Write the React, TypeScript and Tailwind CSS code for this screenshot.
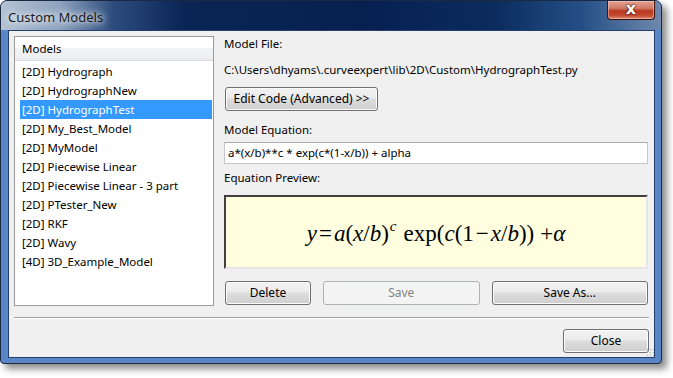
import React from "react";

const models = [
  "[2D] Hydrograph",
  "[2D] HydrographNew",
  "[2D] HydrographTest",
  "[2D] My_Best_Model",
  "[2D] MyModel",
  "[2D] Piecewise Linear",
  "[2D] Piecewise Linear - 3 part",
  "[2D] PTester_New",
  "[2D] RKF",
  "[2D] Wavy",
  "[4D] 3D_Example_Model",
];

const btn =
  "flex items-center justify-center h-[24px] rounded-[3px] border border-[#707070] bg-[linear-gradient(180deg,#f2f2f2_0%,#ebebeb_45%,#dddddd_50%,#cfcfcf_100%)] shadow-[inset_0_0_0_1px_#fbfbfb] text-[12px] text-black";

const btnDisabled =
  "flex items-center justify-center h-[24px] rounded-[3px] border border-[#adb2b5] bg-[#f4f4f4] text-[12px] text-[#838383]";

function Equation() {
  return (
    <div className="font-['Liberation_Serif',serif] text-[23px] text-black whitespace-nowrap flex items-baseline">
      <i>y</i>
      <span className="mx-[2px]">=</span>
      <i>a</i>(<i>x</i>/<i>b</i>)
      <span className="inline-block italic text-[15px] -translate-y-[10px] ml-[1px]">c</span>
      <span className="ml-[7px]">exp(</span>
      <i>c</i>(1<span className="mx-[2px]">−</span>
      <i>x</i>/<i>b</i>))
      <span className="ml-[6px]">+</span>
      <i>α</i>
    </div>
  );
}

export default function App() {
  const selected = 2;

  return (
    <div className="w-[673px] h-[378px] bg-white font-['Noto_Sans',sans-serif] text-[11.5px] text-black">
      <div className="w-[662px] h-[364px] flex flex-col rounded-t-[7px] rounded-b-[4px] border border-[#1b2a40] bg-[#5a86c7] shadow-[5px_5px_7px_rgba(0,0,0,0.45)] overflow-hidden">
        {/* title bar */}
        <div className="h-[29px] shrink-0 flex items-start justify-between bg-[linear-gradient(90deg,#b4c2d4_0%,#8da3bf_9%,#2c4c7c_17%,#0a2454_28%,#062050_55%,#0c2c5e_75%,#244f86_88%,#6f89ad_100%)]">
          <span className="mt-[7px] ml-[7px] text-[13px] text-[#1a1a1a] [text-shadow:0_0_6px_#ffffff,0_0_8px_#ffffff]">
            Custom Models
          </span>
          <div className="mr-[6px] w-[48px] h-[19px] flex items-center justify-center rounded-b-[4px] border border-t-0 border-[#3d130c] bg-[linear-gradient(180deg,#e6a294_0%,#d27a66_40%,#b93a20_55%,#c24a30_80%,#de8a74_100%)] shadow-[inset_0_0_0_1px_rgba(255,210,200,0.5)]">
            <span className="font-['DejaVu_Sans',sans-serif] text-[16px] font-bold leading-none text-white -mt-[2px] [text-shadow:0_0_1px_#2a0a05,0_0_2px_#2a0a05]">
              x
            </span>
          </div>
        </div>

        {/* client */}
        <div className="ml-[7px] mr-[6px] mb-[4px] h-[328px] border border-[#23406c] bg-[#f0f0f0] flex flex-col">
          <div className="flex gap-[10px] pl-[5px] pt-[5px]">
            {/* list */}
            <div className="w-[200px] h-[270px] border border-[#9a9a9a] bg-white">
              <div className="h-[24px] border-b border-[#dcdcdc] bg-[linear-gradient(180deg,#ffffff_0%,#ffffff_50%,#f2f3f5_50%,#eceef0_100%)] pl-[7px] flex items-center">
                Models
              </div>
              <div className="pt-[1px]">
                {models.map((m, i) => (
                  <div key={m} className="pl-[5px] pr-[1px]">
                    <div
                      className={
                        i === selected
                          ? "h-[19px] flex items-center pl-[2px] bg-[#3399ff] text-white"
                          : "h-[19px] flex items-center pl-[2px]"
                      }
                    >
                      {m}
                    </div>
                  </div>
                ))}
              </div>
            </div>

            {/* details */}
            <div className="w-[424px] flex flex-col">
              <div className="h-[16px] leading-[16px]">Model File:</div>
              <div className="mt-[10px] h-[16px] leading-[16px]">
                C:\Users\dhyams\.curveexpert\lib\2D\Custom\HydrographTest.py
              </div>
              <button className={btn + " mt-[9px] w-[153px] ml-[1px]"}>Edit Code (Advanced) &gt;&gt;</button>
              <div className="mt-[11px] h-[16px] leading-[16px]">Model Equation:</div>
              <div className="mt-[4px] h-[22px] border border-[#c5c7cc] border-t-[#abadb3] bg-white pl-[3px] flex items-center">
                a*(x/b)**c * exp(c*(1-x/b)) + alpha
              </div>
              <div className="mt-[6px] h-[16px] leading-[16px]">Equation Preview:</div>
              <div className="mt-[9px] h-[74px] border-[2px] border-t-[#404040] border-l-[#404040] border-r-[#e6e6e6] border-b-[#e6e6e6] bg-[#ffffe0] flex items-center justify-center pt-[4px]">
                <Equation />
              </div>
              <div className="mt-[12px] flex gap-[12px] pl-[1px]">
                <button className={btn + " w-[86px]"}>Delete</button>
                <button className={btnDisabled + " flex-1"}>Save</button>
                <button className={btn + " flex-1"}>Save As...</button>
              </div>
            </div>
          </div>

          <div className="mt-[11px] mx-[5px] h-[2px] border-t border-[#a0a0a0] border-b-[1px] border-b-white" />

          <div className="flex justify-end pr-[5px] mt-[10px] relative">
            <button className={btn + " w-[86px]"}>Close</button>
            <div className="absolute right-[0px] bottom-[-3px] w-[8px] h-[8px] bg-[radial-gradient(circle,#a8a8a8_0.8px,transparent_1px)] bg-[length:3px_3px]" />
          </div>
        </div>
      </div>
    </div>
  );
}
